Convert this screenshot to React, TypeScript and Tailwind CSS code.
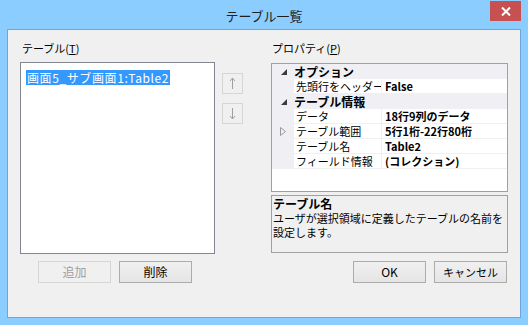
const font = { fontFamily: '"Noto Sans CJK JP", "Noto Sans", sans-serif' };

function Tri() {
  return (
    <svg width="6" height="6" viewBox="0 0 6 6" className="block">
      <polygon points="6,0 6,6 0,6" fill="#3c3c3c" />
    </svg>
  );
}

function Expand() {
  return (
    <svg width="6" height="9" viewBox="0 0 6 9" className="block">
      <polygon points="0.5,0.5 5.5,4.5 0.5,8.5" fill="none" stroke="#9a9a9a" strokeWidth="1" />
    </svg>
  );
}

function Category({ label }: { label: string }) {
  return (
    <div className="flex h-[15px] items-center bg-[#f0f0f4]">
      <div className="flex w-[22px] items-center justify-center pl-[2px]">
        <Tri />
      </div>
      <span className="text-[12px] font-bold leading-[15px] text-black">{label}</span>
    </div>
  );
}

function Prop({ name, value, expand }: { name: string; value: string; expand?: boolean }) {
  return (
    <div className="flex h-[15px]">
      <div className="flex w-[22px] shrink-0 items-center justify-center bg-[#f0f0f4]">
        {expand && <Expand />}
      </div>
      <div className="w-[88px] shrink-0 overflow-hidden whitespace-nowrap border-b border-r border-[#f0f0f0] bg-white pl-[2px] text-[11px] leading-[14px] text-black">
        {name}
      </div>
      <div className="flex-1 overflow-hidden whitespace-nowrap border-b border-[#f0f0f0] bg-white pl-[3px] text-[11px] font-bold leading-[14px] text-black">
        {value}
      </div>
    </div>
  );
}

function Btn({ label, disabled, small }: { label: string; disabled?: boolean; small?: boolean }) {
  return (
    <div
      className={
        'flex h-[22px] w-[73px] items-center justify-center border leading-[14px] ' +
        (small ? 'text-[11px] ' : 'text-[12px] ') +
        (disabled
          ? 'border-[#d5d5d5] bg-[#f0f0f0] text-[#a0a0a0]'
          : 'border-[#acacac] bg-gradient-to-b from-[#f0f0f0] to-[#e5e5e5] text-black')
      }
    >
      {label}
    </div>
  );
}

function Arrow({ up }: { up?: boolean }) {
  return (
    <div className="flex h-[21px] w-[21px] items-center justify-center border border-[#d5d5d5] bg-[#f0f0f0]">
      <svg width="7" height="13" viewBox="0 0 7 13">
        {up ? (
          <path d="M3.5 1 V12 M1 4 L3.5 1 L6 4" stroke="#a0a0a0" strokeWidth="1" fill="none" />
        ) : (
          <path d="M3.5 1 V12 M1 9 L3.5 12 L6 9" stroke="#a0a0a0" strokeWidth="1" fill="none" />
        )}
      </svg>
    </div>
  );
}

export default function App() {
  return (
    <div className="flex h-[325px] w-[528px] flex-col bg-[#8bcdff]" style={font}>
      <div className="relative flex h-[29px] shrink-0 items-center justify-center">
        <span className="pt-[2px] text-[13px] leading-[15px] text-[#1e1e1e]">テーブル一覧</span>
        <div className="absolute right-[7px] top-[1px] flex h-[20px] w-[31px] items-center justify-center bg-[#c75050]">
          <svg width="10" height="9" viewBox="0 0 10 9">
            <path d="M1 0.5 L9 8.5 M9 0.5 L1 8.5" stroke="white" strokeWidth="2" />
          </svg>
        </div>
      </div>
      <div className="mx-[7px] h-[289px] border border-[#6fa6d8] bg-[#f0f0f0]">
        <div className="flex flex-col pl-[12px] pt-[10px]">
          <div className="flex">
            <div className="flex w-[195px] flex-col">
              <div className="h-[22px] pl-[2px] pt-[1px] text-[11px] leading-[15px] text-black">
                テーブル(<span className="underline">T</span>)
              </div>
              <div className="h-[192px] border border-[#828790] bg-white pl-[5px] pt-[1px]">
                <span className="inline-block h-[15px] bg-[#3399ff] px-[1px] text-[12px] leading-[15px] tracking-[0.6px] text-white">
                  画面5_サブ画面1:Table2
                </span>
              </div>
            </div>
            <div className="ml-[7px] mt-[33px] flex flex-col gap-[9px]">
              <Arrow up />
              <Arrow />
            </div>
            <div className="ml-[28px] flex w-[237px] flex-col">
              <div className="h-[23px] pl-[1px] pt-[1px] text-[11px] leading-[15px] text-black">
                プロパティ(<span className="underline">P</span>)
              </div>
              <div className="h-[129px] border border-[#a0a0a0] bg-white">
                <Category label="オプション" />
                <Prop name="先頭行をヘッダーとして使用" value="False" />
                <Category label="テーブル情報" />
                <Prop name="データ" value="18行9列のデータ" />
                <Prop name="テーブル範囲" value="5行1桁-22行80桁" expand />
                <Prop name="テーブル名" value="Table2" />
                <Prop name="フィールド情報" value="(コレクション)" />
              </div>
              <div className="mt-[3px] h-[58px] border border-[#a0a0a0] bg-[#f0f0f0] px-[1px] pt-[1px]">
                <div className="text-[12px] font-bold leading-[14px] text-black">テーブル名</div>
                <div className="text-[11px] leading-[14px] text-black">
                  ユーザが選択領域に定義したテーブルの名前を設定します。
                </div>
              </div>
            </div>
          </div>
          <div className="mt-[7px] flex pr-[13px]">
            <div className="ml-[18px] flex gap-[8px]">
              <Btn label="追加" disabled />
              <Btn label="削除" />
            </div>
            <div className="ml-auto flex gap-[8px]">
              <Btn label="OK" />
              <Btn label="キャンセル" small />
            </div>
          </div>
        </div>
      </div>
    </div>
  );
}
